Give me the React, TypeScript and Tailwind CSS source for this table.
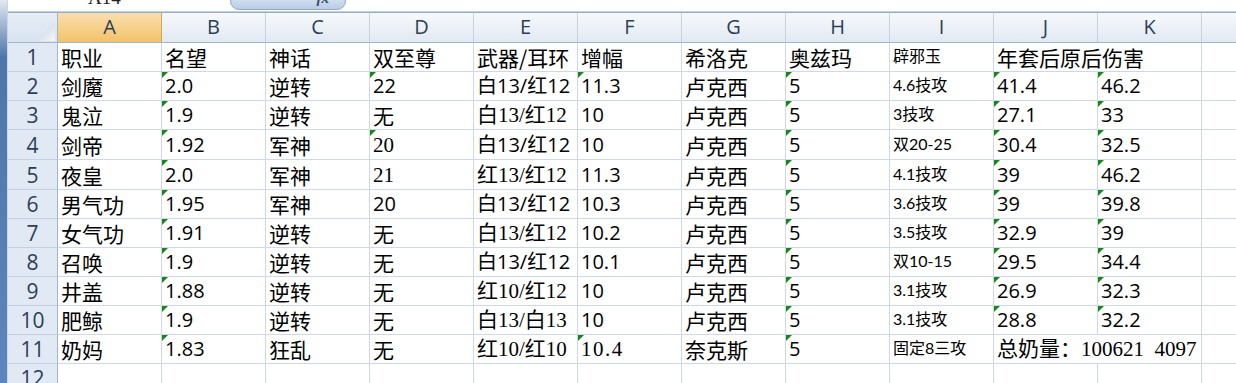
import React from 'react'

type Kind = 'cjk' | 'num' | 'thin' | 'small'
type Cell = { t: string; k: Kind; tri?: boolean; span?: number; wide?: boolean }

const cj = (t: string): Cell => ({ t, k: 'cjk' })
const nm = (t: string, tri = true): Cell => ({ t, k: 'num', tri })
const th = (t: string, tri = false): Cell => ({ t, k: 'thin', tri })
const sm = (t: string): Cell => ({ t, k: 'small' })

const fonts: Record<Kind, string> = {
  cjk: "font-['Noto_Sans_CJK_SC',sans-serif] text-[21px]",
  num: "font-['Open_Sans','Noto_Sans_CJK_SC',sans-serif] text-[20px]",
  thin: "font-['Liberation_Serif','Noto_Sans_CJK_SC',serif] text-[21px]",
  small: "font-['Lato','Noto_Sans_CJK_SC',sans-serif] text-[16px] pb-[1px]",
}

const cols = ['A', 'B', 'C', 'D', 'E', 'F', 'G', 'H', 'I', 'J', 'K']

const rows: Cell[][] = [
  [cj('职业'), cj('名望'), cj('神话'), cj('双至尊'), cj('武器/耳环'), cj('增幅'), cj('希洛克'), cj('奥兹玛'), sm('辟邪玉'), { t: '年套后原后伤害', k: 'cjk', span: 2 }],
  [cj('剑魔'), nm('2.0'), cj('逆转'), nm('22'), nm('白13/红12', false), nm('11.3'), cj('卢克西'), nm('5'), sm('4.6技攻'), nm('41.4'), nm('46.2')],
  [cj('鬼泣'), nm('1.9'), cj('逆转'), cj('无'), th('白13/红12'), nm('10', false), cj('卢克西'), nm('5'), sm('3技攻'), nm('27.1'), nm('33')],
  [cj('剑帝'), nm('1.92'), cj('军神'), th('20', true), nm('白13/红12', false), nm('10', false), cj('卢克西'), nm('5'), sm('双20-25'), nm('30.4'), nm('32.5')],
  [cj('夜皇'), nm('2.0'), cj('军神'), th('21'), th('红13/红12'), nm('11.3', false), cj('卢克西'), nm('5'), sm('4.1技攻'), nm('39'), nm('46.2')],
  [cj('男气功'), nm('1.95'), cj('军神'), nm('20', false), nm('白13/红12', false), nm('10.3', false), cj('卢克西'), nm('5'), sm('3.6技攻'), nm('39'), nm('39.8')],
  [cj('女气功'), nm('1.91'), cj('逆转'), cj('无'), th('白13/红12'), nm('10.2', false), cj('卢克西'), nm('5'), sm('3.5技攻'), nm('32.9'), nm('39')],
  [cj('召唤'), nm('1.9'), cj('逆转'), cj('无'), nm('白13/红12', false), nm('10.1', false), cj('卢克西'), nm('5'), sm('双10-15'), nm('29.5'), nm('34.4')],
  [cj('井盖'), nm('1.88'), cj('逆转'), cj('无'), th('红10/红12'), nm('10', false), cj('卢克西'), nm('5'), sm('3.1技攻'), nm('26.9'), nm('32.3')],
  [cj('肥鲸'), nm('1.9'), cj('逆转'), cj('无'), th('白13/白13'), nm('10', false), cj('卢克西'), nm('5'), sm('3.1技攻'), nm('28.8'), nm('32.2')],
  [cj('奶妈'), nm('1.83'), cj('狂乱'), cj('无'), th('红10/红10'), { t: '10.4', k: 'thin', tri: true, wide: true }, cj('奈克斯'), nm('5'), sm('固定8三攻'), { t: '总奶量：100621  4097', k: 'thin', span: 2 }],
  [],
]

const heights = [29, 29, 29, 30, 30, 29, 29, 29, 29, 29, 29, 29]

function DataCell({ cell }: { cell?: Cell }) {
  const wide = cell?.span === 2
  return (
    <div
      className={`relative flex items-end shrink-0 border-r border-[#d0d7e5] pl-[3px] ${
        wide ? 'w-[208px]' : 'w-[104px]'
      }`}
    >
      {cell?.tri && (
        <div className="absolute left-0 top-0 h-0 w-0 border-t-[6px] border-r-[6px] border-t-[#16871a] border-r-transparent" />
      )}
      {cell && (
        <span
          className={`block whitespace-pre leading-[28px] text-black ${fonts[cell.k]} ${
            cell.wide ? 'tracking-[1.5px]' : ''
          }`}
        >
          {cell.t}
        </span>
      )}
    </div>
  )
}

export default function App() {
  return (
    <div className="flex h-[383px] w-[1236px] overflow-hidden bg-white">
      {/* window frame */}
      <div className="w-[7px] shrink-0 bg-linear-to-b from-[#e4e9f0] via-[#4d76ab] via-15% to-[#5c86bd]" />
      <div className="w-px shrink-0 bg-[#c9d6e5]" />

      <div className="flex min-w-0 flex-1 flex-col">
        {/* formula bar remnant */}
        <div className="flex h-[11px] shrink-0 overflow-hidden bg-white">
          <div className="w-[222px] shrink-0 overflow-hidden">
            <span className="-mt-[12px] ml-[80px] block font-['Liberation_Serif',serif] text-[19px] leading-[19px] text-[#222]">
              A14
            </span>
          </div>
          <div className="-mt-[8px] flex h-[18px] w-[116px] shrink-0 justify-end rounded-b-[9px] border border-[#8fa8c6] bg-linear-to-b from-[#dfe9f5] to-[#b9cde6] pr-[16px]">
            <span className="mt-[-2px] font-['Liberation_Serif',serif] text-[15px] font-bold italic leading-[15px] text-[#3a4f6a]">
              fx
            </span>
          </div>
        </div>
        <div className="h-px shrink-0 bg-[#c4d1e0]" />
        <div className="h-px shrink-0 bg-[#98adc5]" />

        {/* column headers */}
        <div className="flex h-[30px] shrink-0 border-b border-[#9eb6ce]">
          <div className="relative w-[50px] shrink-0 border-r border-[#9eb6ce] bg-linear-to-b from-[#e6edf6] to-[#d9e3f0]">
            <svg className="absolute bottom-[1px] right-[2px]" width="19" height="19" viewBox="0 0 19 19">
              <defs>
                <linearGradient id="corner" x1="0" y1="0" x2="1" y2="1">
                  <stop offset="0" stopColor="#bfcbda" />
                  <stop offset="1" stopColor="#f6f8fb" />
                </linearGradient>
              </defs>
              <polygon points="19,0 19,19 0,19" fill="url(#corner)" />
            </svg>
          </div>
          {cols.map(c => (
            <div
              key={c}
              className={`w-[104px] shrink-0 border-r text-center font-['Open_Sans',sans-serif] text-[20px] leading-[28px] text-[#2c3f58] ${
                c === 'A'
                  ? 'border-[#d9a84e] bg-linear-to-b from-[#fadfae] to-[#f3c268]'
                  : 'border-[#c5d2e0] bg-linear-to-b from-[#f7f9fc] to-[#e2e9f2]'
              }`}
            >
              {c}
            </div>
          ))}
          <div className="flex-1 bg-linear-to-b from-[#f7f9fc] to-[#e2e9f2]" />
        </div>

        {/* rows */}
        {rows.map((row, i) => (
          <div
            key={i}
            className={`flex shrink-0 border-b border-[#d0d7e5] ${heights[i] === 30 ? 'h-[30px]' : 'h-[29px]'}`}
          >
            <div className="flex w-[50px] shrink-0 items-end justify-center border-r border-b border-r-[#9eb6ce] border-b-[#c3d1e2] bg-[#e1e9f4] -mb-px">
              <span className="block font-['Open_Sans',sans-serif] text-[21px] leading-[28px] text-[#2c3f58]">{i + 1}</span>
            </div>
            {(() => {
              const out: React.ReactNode[] = []
              let col = 0
              let idx = 0
              while (col < 11) {
                const cell = row[idx]
                out.push(<DataCell key={col} cell={cell} />)
                col += cell?.span ?? 1
                idx++
              }
              return out
            })()}
            <div className="flex-1" />
          </div>
        ))}
      </div>
    </div>
  )
}
